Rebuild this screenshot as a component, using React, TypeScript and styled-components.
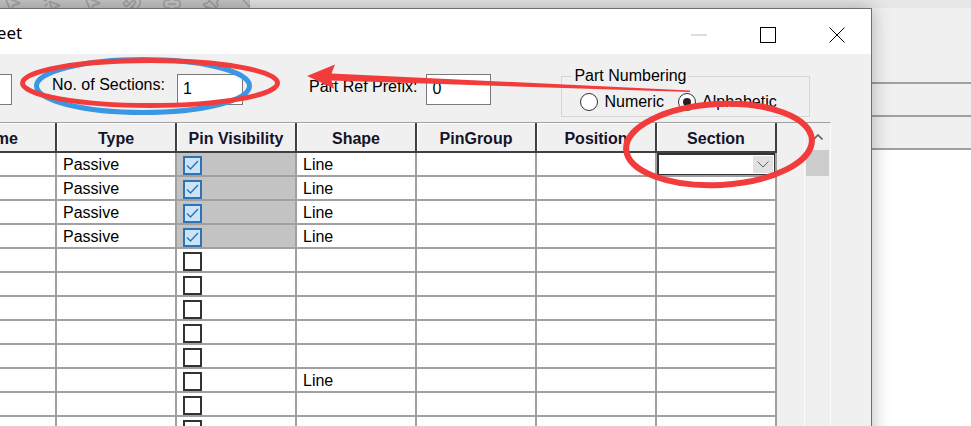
import * as React from 'react';
import styled, { createGlobalStyle } from 'styled-components';
import { MousePointer2, MousePointerClick, Magnet, Link2, Paintbrush, Ruler } from 'lucide-react';

const GlobalStyle = createGlobalStyle`
  html, body {
    margin: 0;
    padding: 0;
  }
  body {
    background: #fff;
    font-family: "Liberation Sans", Arial, sans-serif;
    overflow: hidden;
  }
`;

const Desktop = styled.div`
  position: relative;
  width: 971px;
  height: 426px;
  overflow: hidden;
  display: flex;
  flex-direction: column;
  background: #fff;
`;

const ToolStrip = styled.div`
  display: flex;
  height: 8px;
  flex-shrink: 0;
  background: #e7e7e7;
`;

const ToolIcons = styled.div`
  width: 250px;
  display: flex;
  align-items: flex-end;
  gap: 20px;
  padding-left: 2px;
  box-sizing: border-box;
  overflow: hidden;
  background: #c6c6c6;
  color: #a3a3a3;

  svg {
    flex-shrink: 0;
    margin-bottom: -6px;
  }
`;

const PanelRow = styled.div<{ $h: number }>`
  height: ${(p) => p.$h}px;
  flex-shrink: 0;
  background: #f0f0f0;
  border-bottom: 2px solid #a0a0a0;
`;

const Dialog = styled.div`
  position: absolute;
  top: 8px;
  left: -64px;
  width: 936px;
  height: 440px;
  box-sizing: border-box;
  border: 1px solid #6f6f6f;
  background: #f0f0f0;
  box-shadow: 0 0 18px rgba(0, 0, 0, 0.28);
  display: flex;
  flex-direction: column;
`;

const TitleBar = styled.div`
  height: 45px;
  flex-shrink: 0;
  display: flex;
  align-items: center;
  background: #fff;
`;

const Title = styled.span`
  flex: 1;
  padding-left: 40px;
  padding-top: 2px;
  font-family: "Noto Sans", "Open Sans", sans-serif;
  font-size: 17px;
  color: #000;
`;

const CaptionButton = styled.div`
  width: 69px;
  height: 45px;
  box-sizing: border-box;
  padding-top: 6px;
  display: flex;
  align-items: center;
  justify-content: center;
`;

const DialogBody = styled.div`
  flex: 1;
  display: flex;
  flex-direction: column;
  padding-top: 12px;
  min-height: 0;
`;

const FormRow = styled.div`
  height: 56px;
  flex-shrink: 0;
  display: flex;
  align-items: flex-start;
  padding-left: 13px;
`;

const TextBox = styled.div<{ $w: number; $ml: number }>`
  width: ${(p) => p.$w}px;
  height: 31px;
  margin-left: ${(p) => p.$ml}px;
  margin-top: 8px;
  box-sizing: border-box;
  padding: 5px 0 0 5px;
  border: 1px solid #7a7a7a;
  background: #fff;
  font-size: 16px;
  line-height: 18px;
  color: #000;
`;

const FieldLabel = styled.span<{ $ml: number; $mt: number }>`
  margin-left: ${(p) => p.$ml}px;
  margin-top: ${(p) => p.$mt}px;
  font-size: 16px;
  line-height: 18px;
  color: #000;
  white-space: nowrap;
`;

const GroupBox = styled.fieldset`
  width: 249px;
  box-sizing: border-box;
  margin: 1px 0 0 70px;
  padding: 8px 10px 5px 10px;
  border: 1px solid #d6d6d6;
  min-width: 0;

  legend {
    padding: 0 2px;
    font-size: 16px;
    line-height: 18px;
    color: #000;
  }
`;

const RadioRow = styled.div`
  display: flex;
  align-items: center;
  height: 18px;
  margin-left: 8px;
`;

const RadioOption = styled.label<{ $ml: number }>`
  display: flex;
  align-items: center;
  gap: 6px;
  margin-left: ${(p) => p.$ml}px;
  font-size: 16px;
  line-height: 18px;
  color: #000;
`;

const RadioCircle = styled.span<{ $on: boolean }>`
  width: 18px;
  height: 18px;
  box-sizing: border-box;
  border-radius: 50%;
  border: 1px solid #333;
  background: #fff;
  display: flex;
  align-items: center;
  justify-content: center;

  &::after {
    content: '';
    width: 8px;
    height: 8px;
    border-radius: 50%;
    background: ${(p) => (p.$on ? '#222' : 'transparent')};
  }
`;

const GridFrame = styled.div`
  width: 894px;
  flex: 1;
  min-height: 0;
  display: flex;
  box-sizing: border-box;
  border-top: 1px solid #a0a0a0;
  border-right: 1px solid #fbfbfb;
`;

const Table = styled.div`
  width: 840px;
  flex-shrink: 0;
  display: flex;
  flex-direction: column;
  background: #fff;
`;

const HeaderRow = styled.div`
  height: 30px;
  flex-shrink: 0;
  display: flex;
`;

const HeaderCell = styled.div`
  width: 120px;
  flex-shrink: 0;
  box-sizing: border-box;
  display: flex;
  align-items: center;
  justify-content: center;
  padding-top: 3px;
  background: #f0f0f0;
  border-right: 2px solid #404040;
  border-bottom: 2px solid #404040;
  box-shadow: inset 1px 1px #fff;
  font-size: 16px;
  font-weight: bold;
  color: #14142a;
  white-space: nowrap;
  overflow: hidden;
`;

const Row = styled.div`
  height: 24px;
  flex-shrink: 0;
  display: flex;
`;

const Cell = styled.div<{ $shade?: boolean; $pad?: number }>`
  width: 120px;
  flex-shrink: 0;
  box-sizing: border-box;
  display: flex;
  align-items: center;
  padding-left: ${(p) => (p.$pad ?? 6)}px;
  padding-top: 2px;
  background: ${(p) => (p.$shade ? '#c3c3c3' : '#fff')};
  border-right: 2px solid #a0a0a0;
  border-bottom: 2px solid #a0a0a0;
  font-size: 16px;
  color: #000;
  white-space: nowrap;
`;

const CheckBox = styled.span<{ $on: boolean }>`
  width: 19px;
  height: 19px;
  align-self: flex-end;
  margin-left: 1px;
  box-sizing: border-box;
  border: 2px solid ${(p) => (p.$on ? '#2f72b5' : '#333')};
  background: ${(p) => (p.$on ? '#cce4f7' : '#fff')};
  display: flex;
  align-items: center;
  justify-content: center;
`;

const Combo = styled.div`
  flex: 1;
  height: 22px;
  margin-top: -2px;
  box-sizing: border-box;
  display: flex;
  justify-content: flex-end;
  align-items: center;
  border: 2px solid #333;
  border-right-width: 1px;
  border-bottom-width: 1px;
  background: #fff;
  padding-right: 1px;
`;

const ComboButton = styled.div`
  width: 20px;
  height: 17px;
  display: flex;
  align-items: center;
  justify-content: center;
  background: #e1e1e1;
`;

const EmptyArea = styled.div`
  width: 27px;
  flex-shrink: 0;
  background: #f0f0f0;
`;

const ScrollBar = styled.div`
  width: 26px;
  flex-shrink: 0;
  box-sizing: border-box;
  border-left: 1px solid #fbfbfb;
  background: #f0f0f0;
  display: flex;
  flex-direction: column;
`;

const ScrollArrow = styled.div`
  height: 27px;
  display: flex;
  align-items: center;
  justify-content: center;
`;

const ScrollThumb = styled.div`
  height: 26px;
  margin: 0 1px;
  background: #cdcdcd;
`;

const Annotations = styled.svg`
  position: absolute;
  left: 0;
  top: 0;
  width: 971px;
  height: 426px;
  pointer-events: none;
`;

interface PinRow {
  type: string;
  visible: boolean;
  shape: string;
}

const columns = ['Name', 'Type', 'Pin Visibility', 'Shape', 'PinGroup', 'Position', 'Section'];

const passive: PinRow = { type: 'Passive', visible: true, shape: 'Line' };
const blank: PinRow = { type: '', visible: false, shape: '' };

const rows: PinRow[] = [
  passive,
  passive,
  passive,
  passive,
  blank,
  blank,
  blank,
  blank,
  blank,
  { type: '', visible: false, shape: 'Line' },
  blank,
  blank,
];

function Check() {
  return (
    <svg width="15" height="15" viewBox="0 0 15 15">
      <polyline points="2,7.5 5.5,11 13,3" fill="none" stroke="#2f72b5" strokeWidth="1.4" />
    </svg>
  );
}

export default function App() {
  return (
    <>
      <GlobalStyle />
      <Desktop>
        <ToolStrip>
          <ToolIcons>
            <MousePointer2 size={20} />
            <MousePointerClick size={20} />
            <MousePointer2 size={20} />
            <Magnet size={20} />
            <Link2 size={20} />
            <Paintbrush size={20} />
            <Ruler size={20} />
          </ToolIcons>
        </ToolStrip>
        <PanelRow $h={74} />
        <PanelRow $h={31} />
        <PanelRow $h={31} />

        <Dialog>
          <TitleBar>
            <Title>Sheet</Title>
            <CaptionButton>
              <svg width="16" height="2" viewBox="0 0 16 2">
                <line x1="0" y1="1" x2="16" y2="1" stroke="#bdbdbd" strokeWidth="1" />
              </svg>
            </CaptionButton>
            <CaptionButton>
              <svg width="16" height="16" viewBox="0 0 16 16">
                <rect x="0.5" y="0.5" width="15" height="15" fill="none" stroke="#000" strokeWidth="1" />
              </svg>
            </CaptionButton>
            <CaptionButton>
              <svg width="16" height="16" viewBox="0 0 16 16">
                <path d="M0.5 0.5 L15.5 15.5 M15.5 0.5 L0.5 15.5" stroke="#000" strokeWidth="1" />
              </svg>
            </CaptionButton>
          </TitleBar>

          <DialogBody>
            <FormRow>
              <TextBox $w={62} $ml={0} />
              <FieldLabel $ml={40} $mt={10}>No. of Sections:</FieldLabel>
              <TextBox $w={66} $ml={12}>1</TextBox>
              <FieldLabel $ml={66} $mt={12}>Part Ref Prefix:</FieldLabel>
              <TextBox $w={65} $ml={9}>0</TextBox>
              <GroupBox>
                <legend>Part Numbering</legend>
                <RadioRow>
                  <RadioOption $ml={0}>
                    <RadioCircle $on={false} />
                    Numeric
                  </RadioOption>
                  <RadioOption $ml={14}>
                    <RadioCircle $on={true} />
                    Alphabetic
                  </RadioOption>
                </RadioRow>
              </GroupBox>
            </FormRow>

            <GridFrame>
              <Table>
                <HeaderRow>
                  {columns.map((c) => (
                    <HeaderCell key={c}>{c}</HeaderCell>
                  ))}
                </HeaderRow>
                {rows.map((r, i) => (
                  <Row key={i}>
                    <Cell />
                    <Cell>{r.type}</Cell>
                    <Cell $shade={r.visible} $pad={5}>
                      <CheckBox $on={r.visible}>{r.visible && <Check />}</CheckBox>
                    </Cell>
                    <Cell>{r.shape}</Cell>
                    <Cell />
                    <Cell />
                    <Cell $pad={0}>
                      {i === 0 && (
                        <Combo>
                          <ComboButton>
                            <svg width="12" height="7" viewBox="0 0 12 7">
                              <polyline points="0.5,0.5 6,6 11.5,0.5" fill="none" stroke="#606060" strokeWidth="1" />
                            </svg>
                          </ComboButton>
                        </Combo>
                      )}
                    </Cell>
                  </Row>
                ))}
              </Table>
              <EmptyArea />
              <ScrollBar>
                <ScrollArrow>
                  <svg width="10" height="6" viewBox="0 0 10 6">
                    <polyline points="0.5,5.5 5,1 9.5,5.5" fill="none" stroke="#606060" strokeWidth="1.6" />
                  </svg>
                </ScrollArrow>
                <ScrollThumb />
              </ScrollBar>
            </GridFrame>
          </DialogBody>
        </Dialog>

        <Annotations viewBox="0 0 971 426">
          <ellipse cx="143" cy="86" rx="106.5" ry="26.5" fill="none" stroke="#3b97e3" strokeWidth="5" />
          <ellipse cx="150" cy="83" rx="127.5" ry="22.5" fill="none" stroke="#f23c3c" strokeWidth="5" />
          <polygon
            points="307,76 335,64.5 331.5,73.5 690,90.5 690,92 331.5,80.5 334,88.5"
            fill="#f23c3c"
          />
          <ellipse
            cx="719"
            cy="144.5"
            rx="93"
            ry="40.5"
            fill="none"
            stroke="#f23c3c"
            strokeWidth="6"
            transform="rotate(-3 719 144.5)"
          />
        </Annotations>
      </Desktop>
    </>
  );
}
